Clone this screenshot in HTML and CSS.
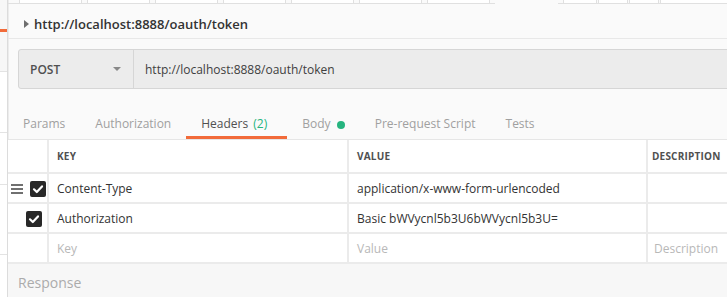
FILE: index.html
```html
<!DOCTYPE html>
<html lang="en">
<head>
    <meta charset="UTF-8">
    <meta name="viewport" content="width=device-width, initial-scale=1.0">
    <title>Request</title>
    <link rel="stylesheet" href="styles.css">
</head>
<body>
    <div class="app">
        <div class="sidebar">
            <div class="side-top"><span class="side-mark"></span></div>
            <div class="side-row side-a"></div>
            <div class="side-row side-b"></div>
            <div class="side-row side-c"></div>
        </div>
        <div class="main">
            <div class="tabstrip">
                <span class="tab-stub"></span>
                <span class="tab-stub"></span>
                <span class="tab-stub"></span>
                <span class="tab-stub"></span>
                <span class="tab-stub"></span>
                <span class="tab-stub"></span>
                <span class="tab-stub"></span>
                <span class="tab-stub active"></span>
                <span class="tab-stub narrow"></span>
                <span class="tab-stub tiny"></span>
                <span class="tab-stub tiny"></span>
                <span class="tab-stub wide"></span>
            </div>

            <div class="title-row">
                <span class="caret-right"></span>
                <span class="title-url">http://localhost:8888/oauth/token</span>
            </div>

            <div class="request-bar">
                <div class="method">
                    <span>POST</span>
                    <span class="caret-down"></span>
                </div>
                <div class="url">http://localhost:8888/oauth/token</div>
            </div>

            <div class="req-tabs">
                <div class="req-tab">Params</div>
                <div class="req-tab">Authorization</div>
                <div class="req-tab active">Headers <span class="count">(2)</span></div>
                <div class="req-tab">Body <span class="dot"></span></div>
                <div class="req-tab">Pre-request Script</div>
                <div class="req-tab">Tests</div>
            </div>

            <table class="headers">
                <colgroup>
                    <col class="col-handle">
                    <col class="col-key">
                    <col class="col-value">
                    <col class="col-desc">
                </colgroup>
                <tr class="head">
                    <th></th>
                    <th>KEY</th>
                    <th>VALUE</th>
                    <th class="desc">DESCRIPTION</th>
                </tr>
                <tr>
                    <td class="handle">
                        <span class="drag"><i></i><i></i><i></i></span>
                        <span class="check"><svg viewBox="0 0 16 16" width="16" height="16"><path d="M4 8.3 L6.8 11 L12 5.4" fill="none" stroke="#fff" stroke-width="2.2" stroke-linecap="round" stroke-linejoin="round"/></svg></span>
                    </td>
                    <td>Content-Type</td>
                    <td>application/x-www-form-urlencoded</td>
                    <td class="desc"></td>
                </tr>
                <tr>
                    <td class="handle">
                        <span class="check"><svg viewBox="0 0 16 16" width="16" height="16"><path d="M4 8.3 L6.8 11 L12 5.4" fill="none" stroke="#fff" stroke-width="2.2" stroke-linecap="round" stroke-linejoin="round"/></svg></span>
                    </td>
                    <td>Authorization</td>
                    <td>Basic bWVycnl5b3U6bWVycnl5b3U=</td>
                    <td class="desc"></td>
                </tr>
                <tr class="empty">
                    <td class="handle"></td>
                    <td>Key</td>
                    <td>Value</td>
                    <td class="desc">Description</td>
                </tr>
            </table>

            <div class="response">Response</div>
        </div>
    </div>
</body>
</html>
```

FILE: styles.css
```css
html, body {
    margin: 0;
    padding: 0;
    height: 100%;
    overflow: hidden;
}
body {
    font-family: "Open Sans", "DejaVu Sans", sans-serif;
    color: #333;
    background: #fafafa;
}
.app {
    display: flex;
    height: 297px;
}

/* left strip */
.sidebar {
    width: 7px;
    flex-shrink: 0;
    background: #fff;
    border-right: 1px solid #dcdcdc;
    display: flex;
    flex-direction: column;
}
.side-top {
    height: 72px;
    background: #f7f7f7;
    border-bottom: 1px solid #e3e3e3;
    padding-top: 29px;
    box-sizing: border-box;
}
.side-mark {
    display: block;
    height: 3px;
    background: #f26b3a;
}
.side-row {
    border-bottom: 1px solid #e3e3e3;
}
.side-a { height: 60px; }
.side-b { height: 51px; }
.side-c { height: 69px; }

.main {
    flex: 1;
    min-width: 0;
    overflow: hidden;
    background: #fafafa;
    box-shadow: inset 1px 0 0 #ececec;
}

/* cut-off tabs at the very top */
.tabstrip {
    display: flex;
    gap: 5px;
    height: 3px;
    padding-left: 11px;
    border-bottom: 1px solid #e0e0e0;
}
.tab-stub {
    width: 61px;
    flex-shrink: 0;
    background: #fff;
    border: 1px solid #e0e0e0;
    border-top: none;
    border-bottom: none;
}
.tab-stub.active {
    background: #fafafa;
    border-color: transparent;
    height: 4px;
}
.tab-stub.narrow { width: 32px; }
.tab-stub.tiny { width: 28px; margin-left: -4px; }
.tab-stub.wide { width: 90px; margin-left: -4px; }

.title-row {
    display: flex;
    align-items: center;
    height: 35px;
    padding: 5px 0 0 16px;
    box-sizing: border-box;
    border-bottom: 1px solid #e8e8e8;
}
.caret-right {
    width: 0;
    height: 0;
    border-top: 4px solid transparent;
    border-bottom: 4px solid transparent;
    border-left: 5px solid #6e6e6e;
    margin-right: 5px;
}
.title-url {
    font-size: 13px;
    font-weight: 600;
    color: #333;
}

.request-bar {
    display: flex;
    height: 38px;
    margin: 10px -6px 0 10px;
    border: 1px solid #d6d6d6;
    border-radius: 3px;
    background: #ececec;
}
.method {
    width: 115px;
    flex-shrink: 0;
    display: flex;
    align-items: center;
    justify-content: space-between;
    padding: 0 12px 0 11px;
    box-sizing: border-box;
    border-right: 1px solid #d6d6d6;
    font-size: 12px;
    font-weight: 600;
    color: #505050;
}
.caret-down {
    width: 0;
    height: 0;
    border-left: 4px solid transparent;
    border-right: 4px solid transparent;
    border-top: 4px solid #888;
}
.url {
    display: flex;
    align-items: center;
    padding-left: 11px;
    font-size: 12px;
    color: #404040;
}

.req-tabs {
    display: flex;
    border-bottom: 1px solid #e6e6e6;
}
.req-tab {
    padding: 27px 15px 4px;
    line-height: 16px;
    font-size: 12px;
    color: #a0a0a0;
    border-bottom: 3px solid transparent;
    white-space: nowrap;
}
.req-tab.active {
    color: #505050;
    border-bottom-color: #f26b3a;
}
.count {
    color: #26b47f;
    margin: 0 5px 0 2px;
}
.dot {
    display: inline-block;
    width: 8px;
    height: 8px;
    margin-left: 3px;
    border-radius: 50%;
    background: #26b47f;
    vertical-align: -0.5px;
}

.headers {
    border-collapse: collapse;
    table-layout: fixed;
    width: 760px;
    font-size: 12px;
}
.col-handle { width: 40px; }
.col-key { width: 300px; }
.col-value { width: 299px; }
.col-desc { width: 121px; }
.headers th,
.headers td {
    height: 28px;
    padding: 0 8px;
    background: #fff;
    border: 2px solid #ebebeb;
    border-top: none;
    text-align: left;
    white-space: nowrap;
    overflow: hidden;
}
.headers th {
    height: 32px;
    font-size: 10px;
    font-weight: 700;
    color: #505050;
    letter-spacing: 0.2px;
}
.headers tr > :first-child {
    border-left: none;
}
.headers td {
    color: #333;
}
.headers .desc {
    padding-left: 4px;
}
.headers .empty td {
    color: #b8b8b8;
}
.headers .empty .desc {
    padding-left: 6px;
}
.headers td.handle {
    padding: 0 5px 0 3px;
    text-align: right;
}
.drag {
    display: inline-flex;
    flex-direction: column;
    gap: 2px;
    vertical-align: middle;
    margin-right: 4px;
}
.drag i {
    display: block;
    width: 12px;
    height: 2px;
    background: #707070;
}
.check {
    display: inline-block;
    width: 16px;
    height: 16px;
    border-radius: 2px;
    background: #282828;
    vertical-align: middle;
}
.check svg {
    display: block;
}

.response {
    height: 34px;
    padding: 5px 0 0 10px;
    box-sizing: border-box;
    line-height: 28px;
    font-size: 14px;
    color: #ababab;
    background: #f7f7f7;
}
```
